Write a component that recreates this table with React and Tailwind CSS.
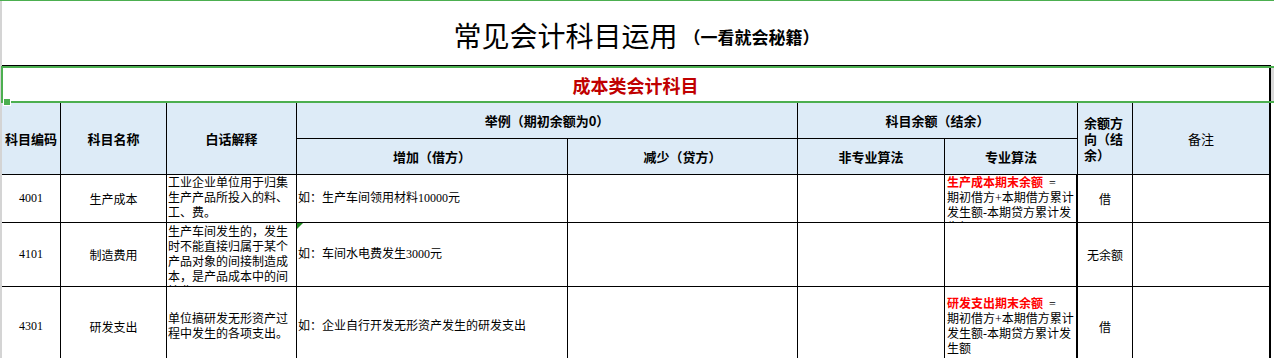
import React from 'react';

const COLS = 'grid grid-cols-[59px_106px_130px_271px_230px_147px_133px_55px_138px]';
const HEAD = 'flex items-center justify-center border-r border-b border-black bg-[#DDEBF7] text-[13px] leading-[16px] font-bold text-black';
const CELL = 'relative flex flex-col overflow-hidden border-r border-b border-black text-[12px] leading-[15px] text-black';

const rows = [
  {
    code: '4001',
    name: '生产成本',
    desc: '工业企业单位用于归集生产产品所投入的料、工、费。',
    descTop: false,
    example: '如：生产车间领用材料10000元',
    pro: { red: '生产成本期末余额', rest: '期初借方+本期借方累计发生额-本期贷方累计发生额' },
    proTop: true,
    dir: '借',
  },
  {
    code: '4101',
    name: '制造费用',
    desc: '生产车间发生的，发生时不能直接归属于某个产品对象的间接制造成本，是产品成本中的间接费用。',
    descTop: true,
    example: '如：车间水电费发生3000元',
    pro: null,
    dir: '无余额',
    mark: true,
  },
  {
    code: '4301',
    name: '研发支出',
    desc: '单位搞研发无形资产过程中发生的各项支出。',
    descTop: false,
    example: '如：企业自行开发无形资产发生的研发支出',
    pro: { red: '研发支出期末余额', rest: '期初借方+本期借方累计发生额-本期贷方累计发生额' },
    proTop: false,
    dir: '借',
  },
];

export default function App() {
  return (
    <div className="relative flex w-[1274px] h-[358px] overflow-hidden bg-white border-t border-[#4CAF50] font-['Liberation_Serif','Noto_Sans_CJK_SC',serif]">
      {/* sheet edge */}
      <div className="w-[2px] shrink-0 bg-[#d4d4d4]" />

      <div className="flex flex-col w-[1272px] font-['Noto_Sans_CJK_SC',sans-serif]">
        {/* Title */}
        <div className="flex shrink-0 items-center justify-center w-[1269px] h-[65px] pt-[4px] border-b border-black">
          <span className="text-[28px] leading-[30px] text-black">常见会计科目运用</span>
          <span className="ml-[6px] mt-[4px] text-[17px] leading-[20px] font-bold text-black">（一看就会秘籍）</span>
        </div>

        {/* Section */}
        <div className="flex shrink-0 h-[37px]">
          <div className="flex items-center justify-center w-[1269px] border-r-2 border-black">
            <span className="text-[18px] leading-[22px] font-bold text-[#C00000]">成本类会计科目</span>
          </div>
          <div className="flex-1 bg-[#d9d9d9]" />
        </div>

        {/* Header */}
        <div className={`${COLS} shrink-0 grid-rows-[36px_36px] w-[1269px]`}>
          <div className={`${HEAD} row-span-2`}>科目编码</div>
          <div className={`${HEAD} row-span-2`}>科目名称</div>
          <div className={`${HEAD} row-span-2`}>白话解释</div>
          <div className={`${HEAD} col-span-2`}>举例（期初余额为0）</div>
          <div className={`${HEAD} col-span-2`}>科目余额（结余）</div>
          <div className={`${HEAD} row-span-2`}>
            <div className="w-[42px]">余额方向（结余）</div>
          </div>
          <div className={`${HEAD} row-span-2 border-r-2 !font-normal`}>备注</div>
          <div className={HEAD}>增加（借方）</div>
          <div className={HEAD}>减少（贷方）</div>
          <div className={HEAD}>非专业算法</div>
          <div className={HEAD}>专业算法</div>
        </div>

        {/* Body */}
        <div className={`${COLS} shrink-0 grid-rows-[48px_64px_80px] w-[1269px]`}>
          {rows.map((r) => (
            <React.Fragment key={r.code}>
              <div className={`${CELL} items-center justify-center font-['Liberation_Serif','Noto_Sans_CJK_SC',serif]`}>{r.code}</div>
              <div className={`${CELL} items-center justify-center`}>{r.name}</div>
              <div className={`${CELL} pl-[1px] ${r.descTop ? 'justify-start pt-[2px]' : 'justify-center'}`}>
                <p className="font-['Liberation_Serif','Noto_Sans_CJK_SC',serif]">{r.desc}</p>
              </div>
              <div className={`${CELL} justify-center pl-[1px]`}>
                {r.mark && (
                  <svg className="absolute left-0 top-0" width="6" height="6" viewBox="0 0 6 6">
                    <polygon points="0,0 6,0 0,6" fill="#1f8a1f" />
                  </svg>
                )}
                <p className="font-['Liberation_Serif','Noto_Sans_CJK_SC',serif]">{r.example}</p>
              </div>
              <div className={CELL} />
              <div className={CELL} />
              <div className={`${CELL} border-r-2 pl-[2px] ${r.proTop ? 'justify-start pt-[1px]' : 'justify-center'}`}>
                {r.pro && (
                  <p className="font-['Liberation_Serif','Noto_Sans_CJK_SC',serif]">
                    <span className="font-bold text-[#FF0000]">{r.pro.red}</span>&nbsp; =
                    <br />
                    {r.pro.rest}
                  </p>
                )}
              </div>
              <div className={`${CELL} items-center justify-center`}>{r.dir}</div>
              <div className={`${CELL} border-r-2`} />
            </React.Fragment>
          ))}
        </div>
      </div>

      {/* selection box over the section row */}
      <div className="pointer-events-none absolute left-[1px] top-[65px] w-[1273px] h-[37px] border-2 border-r-0 border-[#4CAF50]" />
      <div className="pointer-events-none absolute left-[4px] top-[98px] w-[6px] h-[6px] bg-[#4CAF50] ring-1 ring-white" />
    </div>
  );
}
